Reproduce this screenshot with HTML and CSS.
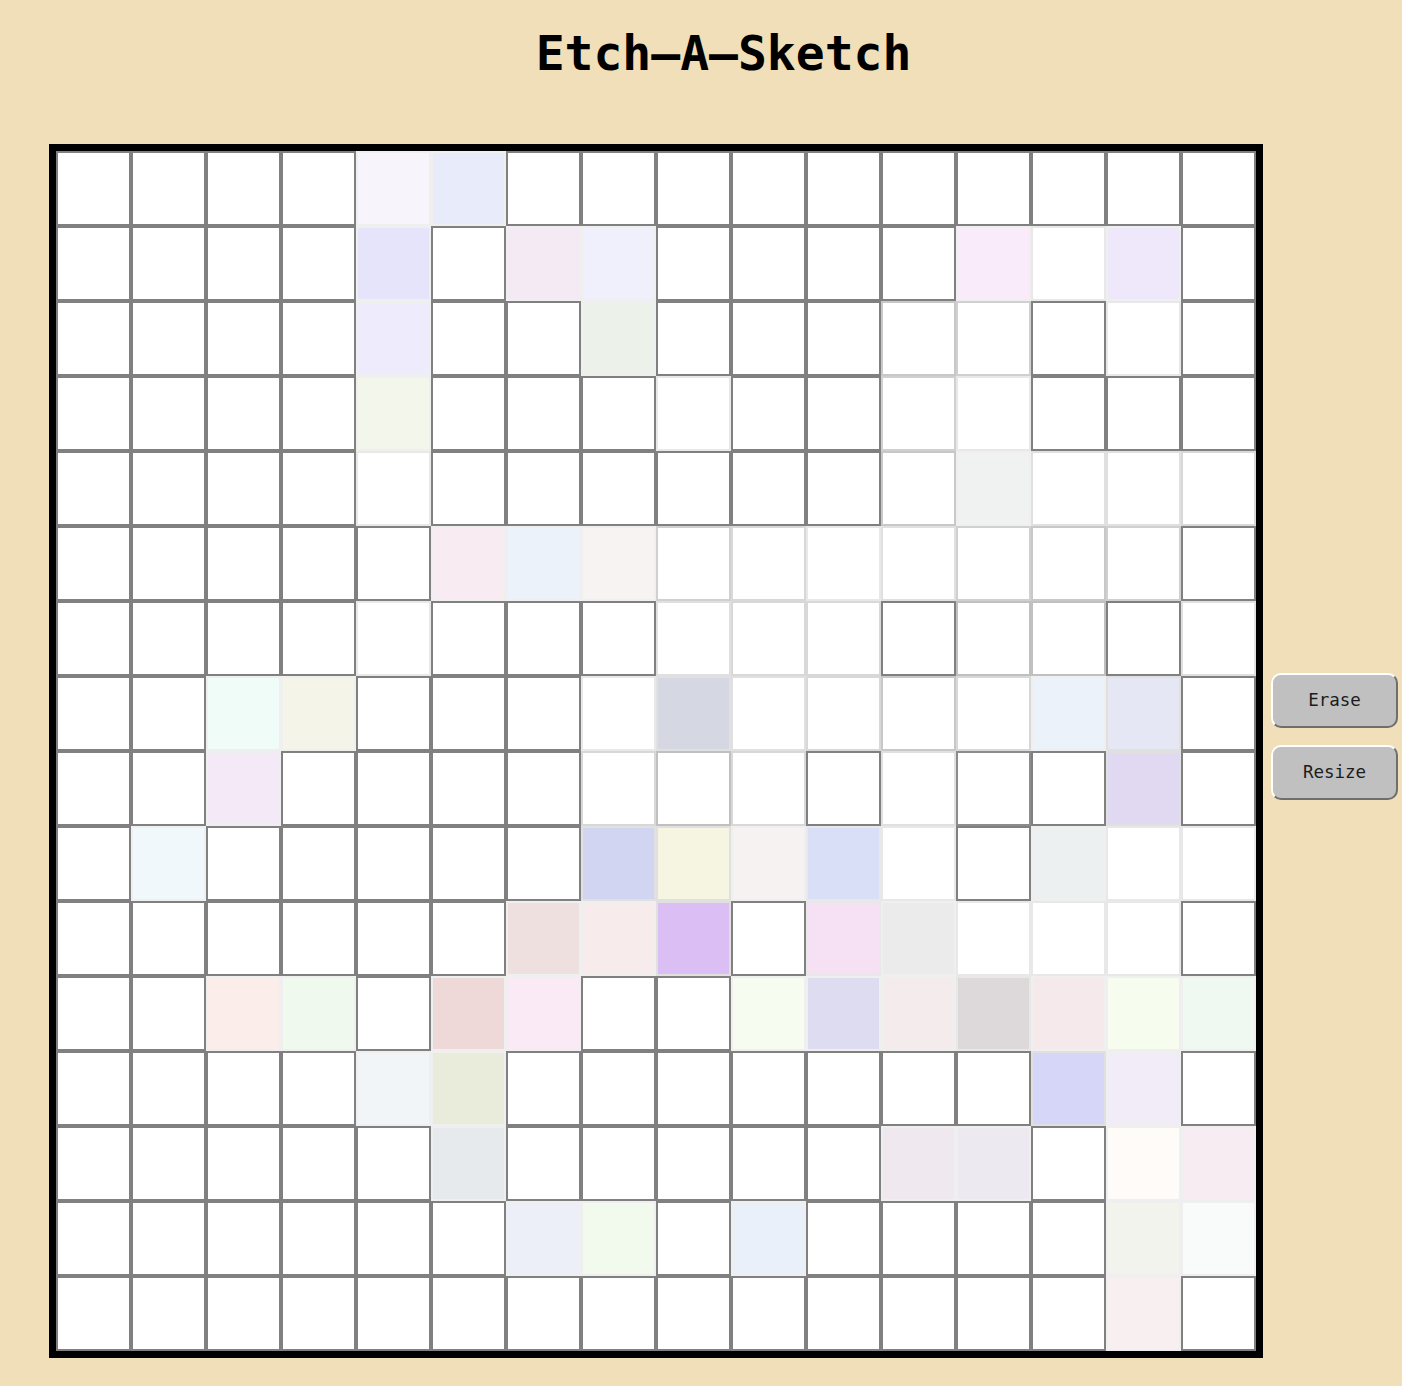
FILE: index.html
```html
<!DOCTYPE html>
<html lang="en">
<head>
<meta charset="utf-8">
<title>Etch-A-Sketch</title>
<link rel="stylesheet" href="styles.css">
</head>
<body>
<div class="page">
  <h1 class="title">Etch–A–Sketch</h1>
  <div class="main">
    <div class="grid">
      <!-- row 0 -->
      <div class="cell"></div><div class="cell"></div><div class="cell"></div><div class="cell"></div>
      <div class="cell lit" style="background:#f7f4fb"></div><div class="cell lit" style="background:#e8ecfa"></div><div class="cell"></div><div class="cell"></div>
      <div class="cell"></div><div class="cell"></div><div class="cell"></div><div class="cell"></div>
      <div class="cell"></div><div class="cell"></div><div class="cell"></div><div class="cell"></div>
      <!-- row 1 -->
      <div class="cell"></div><div class="cell"></div><div class="cell"></div><div class="cell"></div>
      <div class="cell lit" style="background:#e6e4fa"></div><div class="cell"></div><div class="cell lit" style="background:#f4eaf4"></div><div class="cell lit" style="background:#f0f0fc"></div>
      <div class="cell"></div><div class="cell"></div><div class="cell"></div><div class="cell"></div>
      <div class="cell lit" style="background:#f9ebf9"></div><div class="cell" style="border-color:#e8e8e8"></div><div class="cell lit" style="background:#eee8fa"></div><div class="cell"></div>
      <!-- row 2 -->
      <div class="cell"></div><div class="cell"></div><div class="cell"></div><div class="cell"></div>
      <div class="cell lit" style="background:#eeebfc"></div><div class="cell"></div><div class="cell"></div><div class="cell lit" style="background:#ecf1ea"></div>
      <div class="cell"></div><div class="cell"></div><div class="cell"></div><div class="cell" style="border-color:#c8c8c8"></div>
      <div class="cell" style="border-color:#d0d0d0"></div><div class="cell"></div><div class="cell" style="border-color:#e8e8e8"></div><div class="cell"></div>
      <!-- row 3 -->
      <div class="cell"></div><div class="cell"></div><div class="cell"></div><div class="cell"></div>
      <div class="cell lit" style="background:#f3f7eb"></div><div class="cell"></div><div class="cell"></div><div class="cell"></div>
      <div class="cell" style="border-color:#e8e8e8"></div><div class="cell"></div><div class="cell"></div><div class="cell" style="border-color:#d0d0d0"></div>
      <div class="cell" style="border-color:#e8e8e8"></div><div class="cell"></div><div class="cell"></div><div class="cell"></div>
      <!-- row 4 -->
      <div class="cell"></div><div class="cell"></div><div class="cell"></div><div class="cell"></div>
      <div class="cell" style="border-color:#e8e8e8"></div><div class="cell"></div><div class="cell"></div><div class="cell"></div>
      <div class="cell"></div><div class="cell"></div><div class="cell"></div><div class="cell" style="border-color:#c8c8c8"></div>
      <div class="cell lit" style="background:#f0f2f2"></div><div class="cell" style="border-color:#e0e0e0"></div><div class="cell" style="border-color:#e0e0e0"></div><div class="cell" style="border-color:#d8d8d8"></div>
      <!-- row 5 -->
      <div class="cell"></div><div class="cell"></div><div class="cell"></div><div class="cell"></div>
      <div class="cell"></div><div class="cell lit" style="background:#f8ecf2"></div><div class="cell lit" style="background:#ebf2fa"></div><div class="cell lit" style="background:#f7f3f3"></div>
      <div class="cell" style="border-color:#d0d0d0"></div><div class="cell" style="border-color:#d8d8d8"></div><div class="cell" style="border-color:#e8e8e8"></div><div class="cell" style="border-color:#e0e0e0"></div>
      <div class="cell" style="border-color:#d0d0d0"></div><div class="cell" style="border-color:#c8c8c8"></div><div class="cell" style="border-color:#d0d0d0"></div><div class="cell"></div>
      <!-- row 6 -->
      <div class="cell"></div><div class="cell"></div><div class="cell"></div><div class="cell"></div>
      <div class="cell" style="border-color:#e8e8e8"></div><div class="cell"></div><div class="cell"></div><div class="cell"></div>
      <div class="cell" style="border-color:#e0e0e0"></div><div class="cell" style="border-color:#d8d8d8"></div><div class="cell" style="border-color:#d8d8d8"></div><div class="cell"></div>
      <div class="cell" style="border-color:#c0c0c0"></div><div class="cell" style="border-color:#c0c0c0"></div><div class="cell"></div><div class="cell" style="border-color:#e0e0e0"></div>
      <!-- row 7 -->
      <div class="cell"></div><div class="cell"></div><div class="cell lit" style="background:#f0fcf8"></div><div class="cell lit" style="background:#f4f4e8"></div>
      <div class="cell"></div><div class="cell"></div><div class="cell"></div><div class="cell" style="border-color:#e8e8e8"></div>
      <div class="cell" style="background:#d5d7e3;border-color:#e0e0e0"></div><div class="cell" style="border-color:#e0e0e0"></div><div class="cell" style="border-color:#d8d8d8"></div><div class="cell" style="border-color:#c8c8c8"></div>
      <div class="cell" style="border-color:#d8d8d8"></div><div class="cell lit" style="background:#ebf2fa"></div><div class="cell" style="background:#e6e7f5;border-color:#e0e0e0"></div><div class="cell"></div>
      <!-- row 8 -->
      <div class="cell"></div><div class="cell"></div><div class="cell lit" style="background:#f4e9f6"></div><div class="cell"></div>
      <div class="cell"></div><div class="cell"></div><div class="cell"></div><div class="cell" style="border-color:#d8d8d8"></div>
      <div class="cell" style="border-color:#c0c0c0"></div><div class="cell" style="border-color:#d8d8d8"></div><div class="cell"></div><div class="cell" style="border-color:#e0e0e0"></div>
      <div class="cell" style="border-color:#8c8c8c"></div><div class="cell"></div><div class="cell" style="background:#e1d9f1;border-color:#e0e0e0"></div><div class="cell"></div>
      <!-- row 9 -->
      <div class="cell"></div><div class="cell lit" style="background:#f1f8fb"></div><div class="cell"></div><div class="cell"></div>
      <div class="cell"></div><div class="cell"></div><div class="cell"></div><div class="cell" style="background:#d2d5f1;border-color:#e0e0e0"></div>
      <div class="cell" style="background:#f5f5e1;border-color:#e0e0e0"></div><div class="cell lit" style="background:#f7f2f2"></div><div class="cell" style="background:#dadff8;border-color:#e8e8e8"></div><div class="cell" style="border-color:#e8e8e8"></div>
      <div class="cell"></div><div class="cell lit" style="background:#ecf0f0"></div><div class="cell" style="border-color:#e8e8e8"></div><div class="cell" style="border-color:#e8e8e8"></div>
      <!-- row 10 -->
      <div class="cell"></div><div class="cell"></div><div class="cell"></div><div class="cell"></div>
      <div class="cell"></div><div class="cell"></div><div class="cell lit" style="background:#ede0de"></div><div class="cell lit" style="background:#f7ebeb"></div>
      <div class="cell" style="background:#dbbff4;border-color:#e0e0e0"></div><div class="cell"></div><div class="cell" style="background:#f6e0f4;border-color:#e8e8e8"></div><div class="cell lit" style="background:#ebebeb"></div>
      <div class="cell" style="border-color:#e8e8e8"></div><div class="cell" style="border-color:#e8e8e8"></div><div class="cell" style="border-color:#e8e8e8"></div><div class="cell"></div>
      <!-- row 11 -->
      <div class="cell"></div><div class="cell"></div><div class="cell lit" style="background:#faedea"></div><div class="cell lit" style="background:#eff9ee"></div>
      <div class="cell"></div><div class="cell lit" style="background:#eed8d8"></div><div class="cell lit" style="background:#faeaf5"></div><div class="cell"></div>
      <div class="cell"></div><div class="cell lit" style="background:#f6fcf0"></div><div class="cell lit" style="background:#dddcf0"></div><div class="cell lit" style="background:#f4ecec"></div>
      <div class="cell" style="background:#ddd8da;border-color:#e8e8e8"></div><div class="cell lit" style="background:#f5e9ec"></div><div class="cell lit" style="background:#f6fcee"></div><div class="cell lit" style="background:#eff9f2"></div>
      <!-- row 12 -->
      <div class="cell"></div><div class="cell"></div><div class="cell"></div><div class="cell"></div>
      <div class="cell lit" style="background:#f1f5f8"></div><div class="cell lit" style="background:#e9ecdb"></div><div class="cell"></div><div class="cell"></div>
      <div class="cell"></div><div class="cell"></div><div class="cell"></div><div class="cell"></div>
      <div class="cell"></div><div class="cell" style="background:#d6d6f8;border-color:#e0e0e0"></div><div class="cell lit" style="background:#f1ecf7"></div><div class="cell"></div>
      <!-- row 13 -->
      <div class="cell"></div><div class="cell"></div><div class="cell"></div><div class="cell"></div>
      <div class="cell"></div><div class="cell lit" style="background:#e6eaed"></div><div class="cell"></div><div class="cell"></div>
      <div class="cell"></div><div class="cell"></div><div class="cell"></div><div class="cell lit" style="background:#efe9ef"></div>
      <div class="cell lit" style="background:#ece9f0"></div><div class="cell"></div><div class="cell lit" style="background:#fffbf8"></div><div class="cell lit" style="background:#f6ecf1"></div>
      <!-- row 14 -->
      <div class="cell"></div><div class="cell"></div><div class="cell"></div><div class="cell"></div>
      <div class="cell"></div><div class="cell"></div><div class="cell lit" style="background:#eceef8"></div><div class="cell lit" style="background:#f2f9ed"></div>
      <div class="cell"></div><div class="cell lit" style="background:#e9f0fa"></div><div class="cell"></div><div class="cell"></div>
      <div class="cell"></div><div class="cell"></div><div class="cell lit" style="background:#f1f3ec"></div><div class="cell lit" style="background:#f8fbfa"></div>
      <!-- row 15 -->
      <div class="cell"></div><div class="cell"></div><div class="cell"></div><div class="cell"></div>
      <div class="cell"></div><div class="cell"></div><div class="cell"></div><div class="cell"></div>
      <div class="cell"></div><div class="cell"></div><div class="cell"></div><div class="cell"></div>
      <div class="cell"></div><div class="cell"></div><div class="cell lit" style="background:#f8eff0"></div><div class="cell"></div>
    </div>
    <div class="controls">
      <button class="btn" type="button">Erase</button>
      <button class="btn" type="button">Resize</button>
    </div>
  </div>
</div>
</body>
</html>
```
FILE: styles.css
```css
html, body {
  margin: 0;
  padding: 0;
}

body {
  background: #f0dfb8;
  font-family: "DejaVu Sans Mono", "Liberation Mono", monospace;
  color: #000;
}

.page {
  width: fit-content;
  padding-left: 49px;
}

.title {
  margin: 0 0 63px;
  padding-top: 25px;
  font-size: 48px;
  line-height: 56px;
  font-weight: bold;
  text-align: center;
}

.main {
  display: flex;
  align-items: center;
  gap: 8px;
}

.grid {
  display: grid;
  grid-template-columns: repeat(16, 75px);
  grid-auto-rows: 75px;
  border: 7px solid #000;
  background: #fff;
}

.cell {
  box-sizing: border-box;
  width: 75px;
  height: 75px;
  border: 2px solid #808080;
  background: #fff;
}

.cell.lit {
  border-color: #efefef;
}

.controls {
  display: flex;
  flex-direction: column;
  gap: 17px;
  padding-bottom: 30px;
}

.btn {
  box-sizing: border-box;
  width: 127px;
  height: 55px;
  padding: 0;
  font-family: "DejaVu Sans Mono", monospace;
  font-size: 17.5px;
  color: #1c1c1c;
  background: #c0c0c0;
  border: 2px solid;
  border-color: #ffffff #6e6e6e #6e6e6e #ffffff;
  border-radius: 10px;
}
```
